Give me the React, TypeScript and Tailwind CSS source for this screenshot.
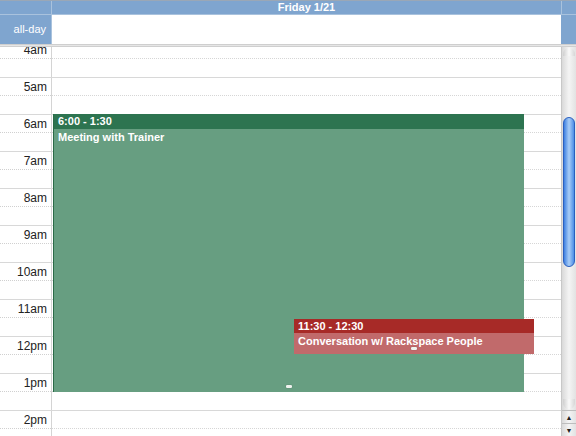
import React from "react";

const HOURS = ["4am", "5am", "6am", "7am", "8am", "9am", "10am", "11am", "12pm", "1pm", "2pm"];
const HOUR_H = 37;

function HourRow({ label }: { label: string }) {
  return (
    <div className="flex h-[37px] border-t border-[#d8d8d8]">
      <div className="w-[52px] shrink-0 border-r border-[#d4d4d4]">
        <div className="h-[18px] border-b border-dotted border-[#d0d0d0] pr-[4px] text-right text-[12px] leading-[18px] text-[#222]">
          {label}
        </div>
      </div>
      <div className="flex-1">
        <div className="h-[18px] border-b border-dotted border-[#d6d6d6]" />
      </div>
    </div>
  );
}

function Handle() {
  return <div className="absolute bottom-[4px] left-1/2 h-[3px] w-[6px] -translate-x-1/2 rounded-[1px] bg-[#eef3ee] shadow-[0_0_1px_rgba(0,0,0,0.4)]" />;
}

export default function App() {
  return (
    <div
      className="flex h-[436px] w-[576px] flex-col overflow-hidden bg-white"
      style={{ fontFamily: '"Liberation Sans", Arial, sans-serif' }}
    >
      {/* day header */}
      <div className="flex h-[14px] shrink-0 border-t border-[#9aa7b6] bg-[#7fa5cf]">
        <div className="w-[52px] shrink-0 border-r border-[#a9c2dd]" />
        <div className="flex-1 text-center text-[11px] font-bold leading-[13px] text-white">Friday 1/21</div>
        <div className="w-[15px] shrink-0 border-l border-[#a9c2dd]" />
      </div>

      {/* all-day row */}
      <div className="flex h-[30px] shrink-0 border-t border-[#a9c2dd]">
        <div className="flex w-[52px] shrink-0 items-center justify-end border-r border-[#a9c2dd] bg-[#7fa5cf] pr-[5px] text-[11px] text-white">
          all-day
        </div>
        <div className="flex-1 bg-white" />
        <div className="w-[15px] shrink-0 bg-[#7fa5cf]" />
      </div>
      <div className="h-[3px] shrink-0 border-t border-b border-[#cfcfcf] bg-[#e6e6e6]" />

      {/* scrolling body */}
      <div className="flex min-h-0 flex-1">
        <div className="relative min-w-0 flex-1 overflow-hidden">
          <div className="relative -mt-[7px]">
            {HOURS.map((h) => (
              <HourRow key={h} label={h} />
            ))}

            {/* events */}
            <div className="absolute inset-y-0 left-[52px] right-0">
              <div
                className="absolute left-[1px] w-[471px] border-l border-[#2a6a47] bg-[#679e81]"
                style={{ top: HOUR_H * 2, height: HOUR_H * 7.5 }}
              >
                <div className="h-[15px] bg-[#2d7450] pl-[4px] text-[11px] font-bold leading-[15px] text-white">6:00 - 1:30</div>
                <div className="pl-[4px] pt-[2px] text-[11px] font-bold leading-[13px] text-white">Meeting with Trainer</div>
                <Handle />
              </div>
              <div
                className="absolute left-[242px] w-[240px] bg-[#c16a6b]"
                style={{ top: HOUR_H * 7.5 + 1, height: HOUR_H - 2 }}
              >
                <div className="h-[14px] bg-[#a72a27] pl-[4px] text-[11px] font-bold leading-[14px] text-white">11:30 - 12:30</div>
                <div className="pl-[4px] pt-[2px] text-[11px] font-bold leading-[13px] text-white">Conversation w/ Rackspace People</div>
                <Handle />
              </div>
            </div>
          </div>
        </div>

        {/* scrollbar */}
        <div className="flex w-[15px] shrink-0 flex-col border-l border-[#c8c8c8] bg-gradient-to-r from-[#d9d9d9] via-[#f4f4f4] to-[#e2e2e2]">
          <div className="relative flex-1">
            <div className="absolute inset-x-[1px] top-[1px] h-[8px] rounded-t-full bg-gradient-to-r from-[#cfcfcf] via-[#fafafa] to-[#d6d6d6]" />
            <div className="absolute left-[1px] right-[1px] top-[70px] h-[150px] rounded-full border border-[#2a5fbf] bg-gradient-to-r from-[#3c7fe0] via-[#a9cdf6] to-[#4c8ee6]" />
            <div className="absolute inset-x-[1px] bottom-[1px] h-[10px] rounded-b-full bg-gradient-to-r from-[#cfcfcf] via-[#fafafa] to-[#d6d6d6]" />
          </div>
          <div className="flex h-[13px] items-center justify-center border-t border-[#bdbdbd] text-[7px] leading-none text-[#222]">▲</div>
          <div className="flex h-[13px] items-center justify-center border-t border-[#bdbdbd] text-[7px] leading-none text-[#222]">▼</div>
        </div>
      </div>
    </div>
  );
}
